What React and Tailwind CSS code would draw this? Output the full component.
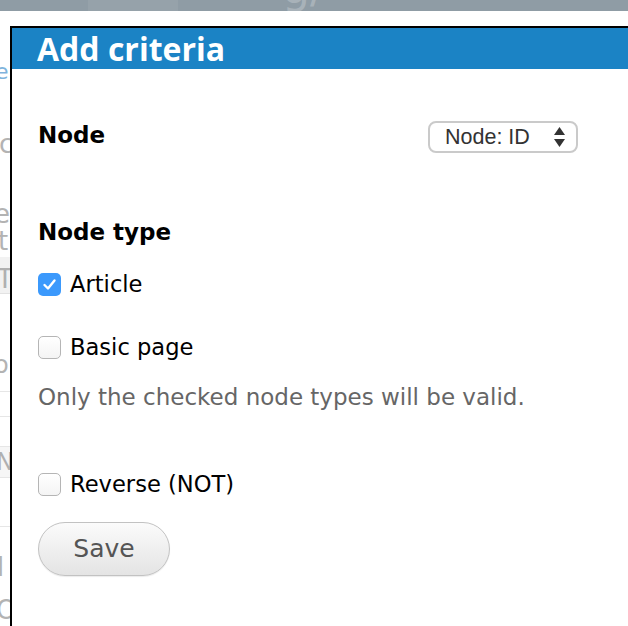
const sans = { fontFamily: '"DejaVu Sans", Verdana, sans-serif' };

function Checkbox({ checked }) {
  if (checked) {
    return (
      <span className="flex h-[23px] w-[23px] shrink-0 items-center justify-center rounded-[5px] bg-[#3b99fc]">
        <svg width="15" height="15" viewBox="0 0 15 15">
          <polyline points="2.5,8 6,11.5 12.5,3.5" fill="none" stroke="white" strokeWidth="2.4" strokeLinecap="round" strokeLinejoin="round" />
        </svg>
      </span>
    );
  }
  return (
    <span className="h-[23px] w-[23px] shrink-0 rounded-[5px] border border-[#b5b5b5] bg-gradient-to-b from-white to-[#f4f4f4]" />
  );
}

function CheckRow({ label, checked }) {
  return (
    <label className="flex h-[24px] items-center gap-[9px]">
      <Checkbox checked={checked} />
      <span className="text-[22.6px] leading-[24px] text-black">{label}</span>
    </label>
  );
}

function BackgroundStrip() {
  // bits of the page underneath the dialog, only 10px of it shows
  return (
    <div className="w-[10px] overflow-hidden whitespace-nowrap" style={sans}>
      <div className="h-[34px]" />
      <div className="h-[24px] text-[22px] leading-[24px] text-[#7fb3dc] -ml-[5px]">e</div>
      <div className="h-[45px]" />
      <div className="h-[30px] text-[26px] leading-[30px] text-[#b3b3b3] -ml-[1px]">c</div>
      <div className="h-[44px]" />
      <div className="h-[22px] text-[26px] leading-[22px] text-[#b3b3b3] -ml-[6px]">e</div>
      <div className="h-[5px]" />
      <div className="h-[22px] text-[26px] leading-[22px] text-[#b3b3b3] -ml-[2px]">t</div>
      <div className="h-[5px]" />
      <div className="h-[37px] border-b border-[#e2e2e2] bg-[#f2f2f2] pt-[8px] text-[26px] leading-[28px] text-[#b0b0b0] -ml-[3px]">T</div>
      <div className="h-[59px]" />
      <div className="h-[24px] text-[24px] leading-[24px] text-[#b3b3b3] -ml-[6px]">o</div>
      <div className="h-[15px] border-b border-[#e6e6e6]" />
      <div className="h-[25px] border-b border-[#e6e6e6]" />
      <div className="h-[30px] border-b border-[#e6e6e6]" />
      <div className="h-[31px] border-b border-[#e6e6e6] bg-[#f6f6f6] text-[24px] leading-[30px] text-[#b0b0b0] -ml-[4px]">N</div>
      <div className="h-[49px] border-b border-[#e6e6e6]" />
      <div className="h-[27px]" />
      <div className="h-[26px] text-[26px] leading-[26px] text-[#b3b3b3] -ml-[3px]">l</div>
      <div className="h-[16px]" />
      <div className="h-[28px] text-[26px] leading-[28px] text-[#b3b3b3] -ml-[4px]">Or</div>
    </div>
  );
}

export default function App() {
  return (
    <div className="relative h-[626px] w-[628px] overflow-hidden bg-white">
      <div className="relative h-[11px] overflow-hidden bg-[#8f9ca5]">
        <div className="absolute left-[88px] top-0 h-[11px] w-[90px] bg-[#96a2aa]" />
        <span className="absolute left-[282px] top-[-34px] text-[44px] leading-[44px] text-[#a8b2b9]" style={sans}>g/</span>
      </div>
      <div className="h-[15px]" />
      <BackgroundStrip />

      <div className="absolute bottom-0 left-[10px] right-0 top-[26px] border-l-2 border-t-2 border-black bg-white">
        <div className="flex h-[41px] items-center bg-[#1b83c5] pl-[25px]">
          <h1 className="text-[32px] font-bold leading-[41px] text-white" style={{ fontFamily: '"Open Sans", sans-serif' }}>
            Add criteria
          </h1>
        </div>

        <div className="pl-[26px] pr-[50px] pt-[52px]" style={sans}>
          <div className="flex items-start justify-between">
            <span className="text-[23px] font-bold leading-[28px] text-black">Node</span>
            <div className="flex h-[32px] w-[150px] items-center justify-between rounded-[8px] border-2 border-[#cacaca] bg-white pl-[15px] pr-[11px]">
              <span className="text-[21.5px] leading-[28px] text-[#333]" style={{ fontFamily: '"Liberation Sans", Arial, sans-serif' }}>
                Node: ID
              </span>
              <svg width="11" height="20" viewBox="0 0 11 20">
                <polygon points="5.5,0 11,8 0,8" fill="#333" />
                <polygon points="0,12 11,12 5.5,20" fill="#333" />
              </svg>
            </div>
          </div>

          <div className="mt-[65px] text-[23px] font-bold leading-[28px] text-black">Node type</div>

          <div className="mt-[26px] flex flex-col gap-[39px]">
            <CheckRow label="Article" checked />
            <CheckRow label="Basic page" />
          </div>

          <p className="mt-[26px] text-[23px] leading-[24px] text-[#666]">
            Only the checked node types will be valid.
          </p>

          <div className="mt-[63px]">
            <CheckRow label="Reverse (NOT)" />
          </div>

          <button
            type="button"
            className="mt-[26px] flex h-[54px] w-[132px] items-center justify-center rounded-full border border-[#c2c2c2] bg-gradient-to-b from-[#fbfbfb] to-[#e4e4e4] text-[25px] text-[#555] shadow-[0_1px_1px_rgba(0,0,0,0.08)]"
          >
            Save
          </button>
        </div>
      </div>
    </div>
  );
}
